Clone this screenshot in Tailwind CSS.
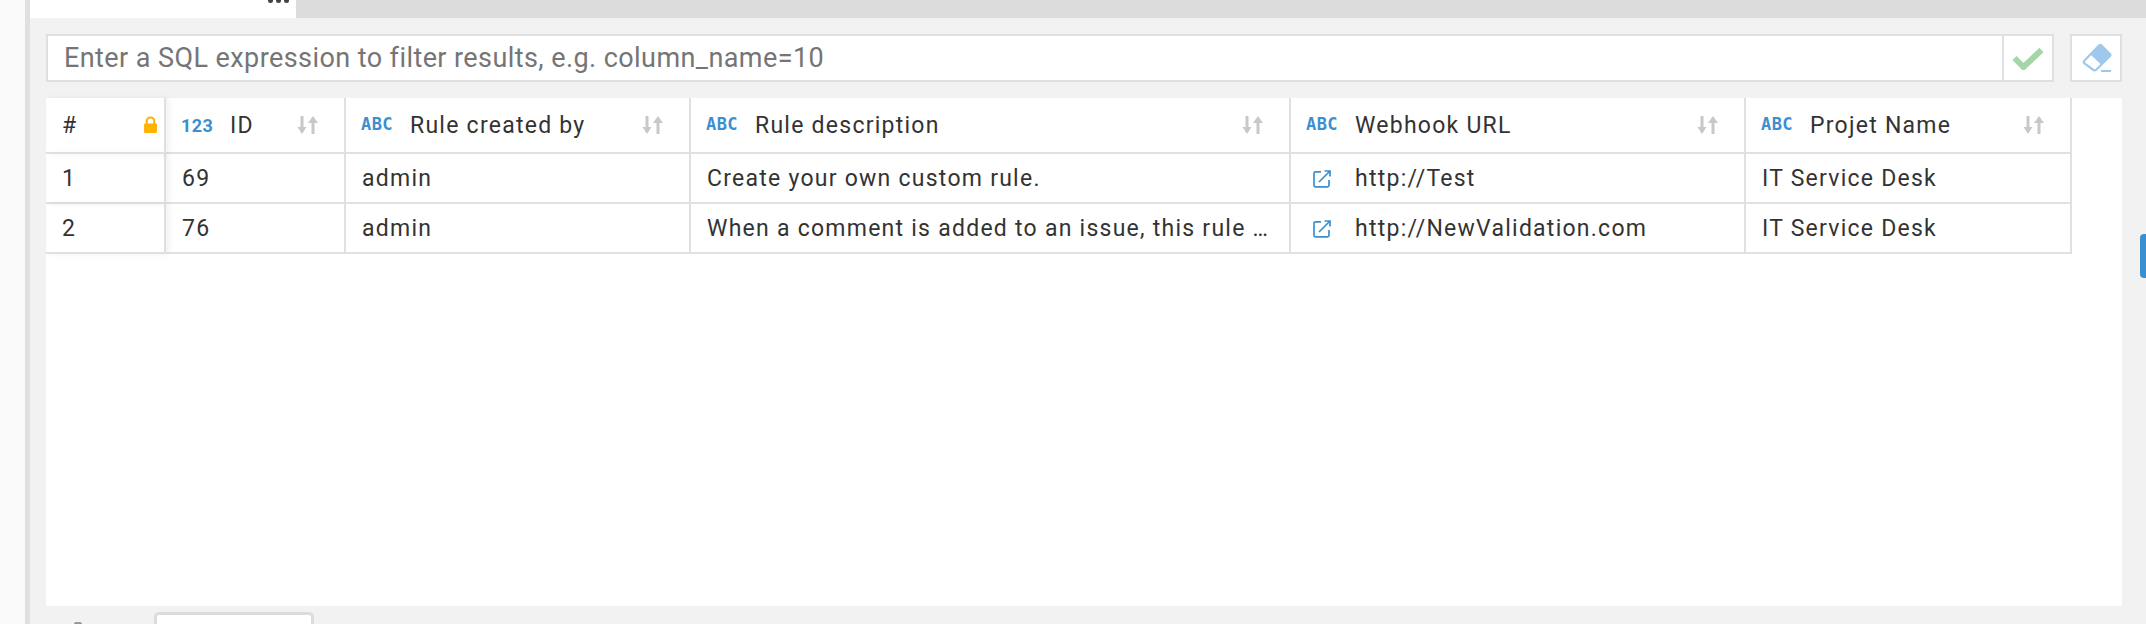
<!DOCTYPE html>
<html><head><meta charset="utf-8"><script src="https://cdn.jsdelivr.net/npm/@tailwindcss/browser@4"></script></head>
<body class="m-0 overflow-hidden bg-[#f2f2f2]">
<div class="relative flex w-[2146px] h-[624px] overflow-hidden bg-[#f2f2f2] font-['Roboto',sans-serif] text-[#333] text-[23px] tracking-[1.25px]">
  <div class="w-[25px] shrink-0 bg-[#fafafa]"></div>
  <div class="w-[5px] shrink-0 bg-[#e0e0e0]"></div>
  <div class="flex-1 flex flex-col min-w-0">
    <div class="flex h-[18px] shrink-0 bg-[#dcdcdc]">
      <div class="relative w-[266px] bg-white">
        <span class="absolute left-[238px] top-0 flex gap-[3px]"><i class="block w-[5px] h-[3px] bg-[#444] rounded-b-full"></i><i class="block w-[5px] h-[3px] bg-[#444] rounded-b-full"></i><i class="block w-[5px] h-[3px] bg-[#444] rounded-b-full"></i></span>
      </div>
    </div>
    <div class="flex gap-[16px] pl-[16px] pt-[16px] h-[64px] shrink-0">
      <div class="flex w-[2008px] h-[48px] border-2 border-[#e0e0e0] bg-white">
        <div class="flex-1 flex items-center pl-[16px] text-[#757575] text-[27px] tracking-[0.42px]">Enter a SQL expression to filter results, e.g. column_name=10</div>
        <div class="w-[50px] border-l-2 border-[#e0e0e0] flex items-center justify-center">
          <svg width="32" height="24" viewBox="0 0 32 24"><path d="M2.500 12l9 9L29.500 4" fill="none" stroke="#a5d6a7" stroke-width="6"/></svg>
        </div>
      </div>
      <div class="w-[52px] h-[48px] border-2 border-[#e0e0e0] bg-white flex items-center justify-center">
        <svg class="ml-[1px]" width="30" height="28" viewBox="0 0 30 28"><path d="M19 1 L28 10 Q29 11 28 12 L14.500 25.500 Q13 27 11.500 26 L2.500 19.500 Q1 18 2.500 16.500 L17 1.500 Q18 0.500 19 1Z" fill="#fff" stroke="#9fc9ec" stroke-width="2.200"/><path d="M18 1 L28.500 10.500 L19 20.500 L8.500 10.500Z" fill="#9fc9ec"/><rect x="19" y="26" width="10" height="2" fill="#9fc9ec"/></svg>
      </div>
    </div>
    <div class="ml-[16px] mt-[16px] w-[2076px] h-[508px] bg-white shrink-0 relative">
      <div class="grid grid-cols-[120px_180px_345px_600px_455px_326px] w-[2026px] grid-rows-[56px_50px_50px]">
        <div class="flex items-center pl-[16px] pr-[6px] border-r-2 border-b-2 border-[#e0e0e0] justify-between relative shadow-[3px_0_6px_rgba(0,0,0,0.06)]"><span class="pt-[2px]">#</span>
          <svg width="15" height="18" viewBox="0 0 14 16"><path d="M3.500 7V4.500a3.500 3.500 0 0 1 7 0V7" fill="none" stroke="#ffb300" stroke-width="2"/><rect x="1" y="6.500" width="12" height="9" rx="1" fill="#ffb300"/></svg>
        </div>
        <div class="flex items-center pl-[15px] pr-[25px] border-r-2 border-b-2 border-[#e0e0e0]">
          <span class="w-[49px] text-[#3b8fd1] text-[18px] font-bold tracking-[0.4px]">123</span><span class="flex-1 pt-[2px]">ID</span>
          <svg class="w-[22px] h-[18px]" viewBox="0 0 22 18"><path d="M3.500 0h3v11H9.500L5 18 0.500 11h3z M14.500 18V7H11L16 0l5 7h-3.500v11z" fill="#c8c8c8"/></svg>
        </div>
        <div class="flex items-center pl-[15px] pr-[25px] border-r-2 border-b-2 border-[#e0e0e0]">
          <span class="w-[49px] text-[#3b8fd1] text-[17px] font-bold tracking-[0.4px] font-['DejaVu_Sans_Mono',monospace]">ABC</span><span class="flex-1 pt-[2px]">Rule created by</span>
          <svg class="w-[22px] h-[18px]" viewBox="0 0 22 18"><path d="M3.500 0h3v11H9.500L5 18 0.500 11h3z M14.500 18V7H11L16 0l5 7h-3.500v11z" fill="#c8c8c8"/></svg>
        </div>
        <div class="flex items-center pl-[15px] pr-[25px] border-r-2 border-b-2 border-[#e0e0e0]">
          <span class="w-[49px] text-[#3b8fd1] text-[17px] font-bold tracking-[0.4px] font-['DejaVu_Sans_Mono',monospace]">ABC</span><span class="flex-1 pt-[2px]">Rule description</span>
          <svg class="w-[22px] h-[18px]" viewBox="0 0 22 18"><path d="M3.500 0h3v11H9.500L5 18 0.500 11h3z M14.500 18V7H11L16 0l5 7h-3.500v11z" fill="#c8c8c8"/></svg>
        </div>
        <div class="flex items-center pl-[15px] pr-[25px] border-r-2 border-b-2 border-[#e0e0e0]">
          <span class="w-[49px] text-[#3b8fd1] text-[17px] font-bold tracking-[0.4px] font-['DejaVu_Sans_Mono',monospace]">ABC</span><span class="flex-1 pt-[2px]">Webhook URL</span>
          <svg class="w-[22px] h-[18px]" viewBox="0 0 22 18"><path d="M3.500 0h3v11H9.500L5 18 0.500 11h3z M14.500 18V7H11L16 0l5 7h-3.500v11z" fill="#c8c8c8"/></svg>
        </div>
        <div class="flex items-center pl-[15px] pr-[25px] border-r-2 border-b-2 border-[#e0e0e0]">
          <span class="w-[49px] text-[#3b8fd1] text-[17px] font-bold tracking-[0.4px] font-['DejaVu_Sans_Mono',monospace]">ABC</span><span class="flex-1 pt-[2px]">Projet Name</span>
          <svg class="w-[22px] h-[18px]" viewBox="0 0 22 18"><path d="M3.500 0h3v11H9.500L5 18 0.500 11h3z M14.500 18V7H11L16 0l5 7h-3.500v11z" fill="#c8c8c8"/></svg>
        </div>

        <div class="flex items-center pl-[16px] pt-[2px] border-r-2 border-b-2 border-[#e0e0e0] shadow-[3px_0_6px_rgba(0,0,0,0.06)]">1</div>
        <div class="flex items-center pl-[16px] pt-[2px] border-r-2 border-b-2 border-[#e0e0e0]">69</div>
        <div class="flex items-center pl-[16px] pt-[2px] border-r-2 border-b-2 border-[#e0e0e0]">admin</div>
        <div class="flex items-center pl-[16px] pt-[2px] border-r-2 border-b-2 border-[#e0e0e0]">Create your own custom rule.</div>
        <div class="flex items-center pl-[22px] pt-[2px] border-r-2 border-b-2 border-[#e0e0e0]">
          <svg class="w-[18px] h-[18px] mr-[24px]" viewBox="0 0 18 18"><path d="M8 1.800H2.500a1.500 1.500 0 0 0-1.500 1.500v12a1.500 1.500 0 0 0 1.500 1.500h12a1.500 1.500 0 0 0 1.500-1.500V10M6 12L16.500 1.500M11.500 1h5.500v5.500" fill="none" stroke="#3b8fd1" stroke-width="1.700"/></svg>http://Test</div>
        <div class="flex items-center pl-[16px] pt-[2px] border-r-2 border-b-2 border-[#e0e0e0]">IT Service Desk</div>

        <div class="flex items-center pl-[16px] pt-[2px] border-r-2 border-b-2 border-[#e0e0e0] shadow-[3px_0_6px_rgba(0,0,0,0.06)]">2</div>
        <div class="flex items-center pl-[16px] pt-[2px] border-r-2 border-b-2 border-[#e0e0e0]">76</div>
        <div class="flex items-center pl-[16px] pt-[2px] border-r-2 border-b-2 border-[#e0e0e0]">admin</div>
        <div class="flex items-center pl-[16px] pt-[2px] border-r-2 border-b-2 border-[#e0e0e0]">When a comment is added to an issue, this rule …</div>
        <div class="flex items-center pl-[22px] pt-[2px] border-r-2 border-b-2 border-[#e0e0e0]">
          <svg class="w-[18px] h-[18px] mr-[24px]" viewBox="0 0 18 18"><path d="M8 1.800H2.500a1.500 1.500 0 0 0-1.500 1.500v12a1.500 1.500 0 0 0 1.500 1.500h12a1.500 1.500 0 0 0 1.500-1.500V10M6 12L16.500 1.500M11.500 1h5.500v5.500" fill="none" stroke="#3b8fd1" stroke-width="1.700"/></svg>http://NewValidation.com</div>
        <div class="flex items-center pl-[16px] pt-[2px] border-r-2 border-b-2 border-[#e0e0e0]">IT Service Desk</div>
      </div>
    </div>
    <div class="ml-[124px] mt-[6px] w-[160px] h-[12px] shrink-0 bg-white border-[3px] border-b-0 border-[#dcdcdc] rounded-t-[5px]"></div>
  </div>
  <div class="absolute right-0 top-[234px] w-[6px] h-[44px] bg-[#3a8fd0] rounded-l-[4px]"></div>
  <div class="absolute left-[74px] top-[622px] w-[8px] h-[2px] bg-[#999] rounded-t-full"></div>
</div>
</body></html>
